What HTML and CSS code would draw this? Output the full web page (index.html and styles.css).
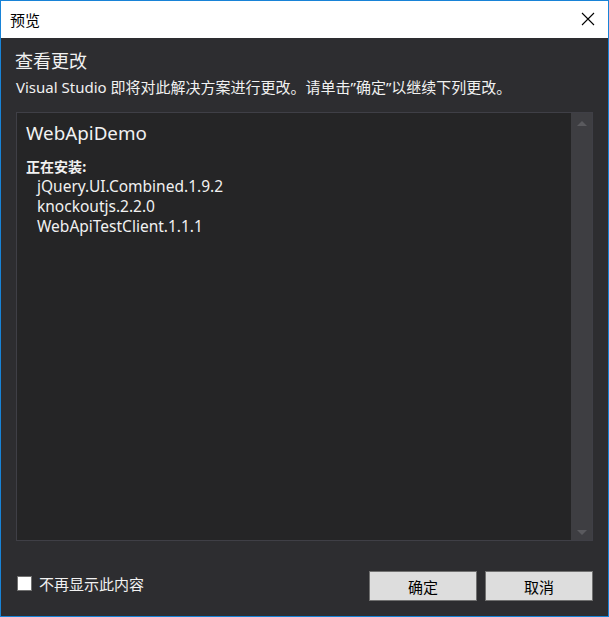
FILE: index.html
```html
<!DOCTYPE html>
<html lang="zh-CN">
<head>
<meta charset="utf-8">
<title>预览</title>
<link rel="stylesheet" href="styles.css">
</head>
<body>
<div class="window">
  <div class="titlebar">
    <span class="title">预览</span>
    <svg class="close" width="14" height="14" viewBox="0 0 14 14"><path d="M1 1 L13 13 M13 1 L1 13" stroke="#000" stroke-width="1.1" fill="none"/></svg>
  </div>
  <div class="content">
    <h1 class="heading">查看更改</h1>
    <p class="desc">Visual Studio 即将对此解决方案进行更改。请单击”确定”以继续下列更改。</p>
    <div class="listbox">
      <div class="list">
        <div class="project">WebApiDemo</div>
        <div class="section">正在安装:</div>
        <div class="item">jQuery.UI.Combined.1.9.2</div>
        <div class="item">knockoutjs.2.2.0</div>
        <div class="item">WebApiTestClient.1.1.1</div>
      </div>
      <div class="scrollbar">
        <span class="arrow up"></span>
        <span class="arrow down"></span>
      </div>
    </div>
  </div>
  <div class="footer">
    <label class="check"><span class="box"></span><span>不再显示此内容</span></label>
    <div class="buttons">
      <button class="btn">确定</button>
      <button class="btn">取消</button>
    </div>
  </div>
</div>
</body>
</html>
```
FILE: styles.css
```css
* { box-sizing: border-box; }
html, body { margin: 0; padding: 0; }
body {
  font-family: "Noto Sans", "Noto Sans CJK SC", sans-serif;
  background: #2d2d30;
}
.window {
  width: 609px;
  height: 617px;
  border: 1px solid #1883d7;
  background: #2d2d30;
  display: flex;
  flex-direction: column;
  color: #f1f1f1;
}
.titlebar {
  height: 37px;
  background: #ffffff;
  display: flex;
  align-items: center;
  justify-content: space-between;
  padding: 0 13px 0 9px;
  flex: none;
}
.title {
  font-family: "Noto Sans CJK SC", sans-serif;
  font-size: 15px;
  color: #000;
  margin-top: -1px;
}
.close { display: block; margin-top: -1px; }
.content {
  padding: 0 15px;
  display: flex;
  flex-direction: column;
}
.heading {
  font-family: "Noto Sans CJK SC", sans-serif;
  font-weight: normal;
  font-size: 18px;
  line-height: 24px;
  margin: 10px 0 0 -1px;
}
.desc {
  font-size: 15px;
  line-height: 20px;
  margin: 5px 0 0 0;
  font-family: "Noto Sans", "Noto Sans CJK SC", sans-serif;
}
.listbox {
  margin-top: 15px;
  height: 429px;
  border: 1px solid #3f3f46;
  background: #252526;
  display: flex;
}
.list {
  flex: 1;
  padding: 8px 0 0 9px;
}
.project {
  font-size: 18.8px;
  line-height: 24px;
}
.section {
  font-family: "Noto Sans CJK SC", sans-serif;
  font-weight: bold;
  font-size: 14px;
  line-height: 20px;
  margin-top: 11px;
}
.item {
  font-size: 15.5px;
  line-height: 20px;
  padding-left: 11px;
}
.scrollbar {
  width: 21px;
  background: #3e3e42;
  display: flex;
  flex-direction: column;
  justify-content: space-between;
  align-items: center;
  padding: 8px 0 5px;
}
.arrow {
  width: 0;
  height: 0;
  border-left: 5px solid transparent;
  border-right: 5px solid transparent;
}
.arrow.up { border-bottom: 5px solid #5a5a5e; }
.arrow.down { border-top: 5px solid #5a5a5e; }
.footer {
  flex: 1;
  display: flex;
  align-items: flex-end;
  justify-content: space-between;
  padding: 0 15px 15px 16px;
}
.check {
  display: flex;
  align-items: center;
  gap: 7px;
  font-family: "Noto Sans CJK SC", sans-serif;
  font-size: 15px;
  margin-bottom: 7px;
}
.box {
  width: 15px;
  height: 15px;
  background: #fff;
  border: 1px solid #707070;
}
.buttons { display: flex; gap: 8px; }
.btn {
  width: 108px;
  height: 30px;
  background: #dddddd;
  border: 1px solid #707070;
  font-family: "Noto Sans CJK SC", sans-serif;
  font-size: 15px;
  color: #000;
  padding: 0;
}
```
